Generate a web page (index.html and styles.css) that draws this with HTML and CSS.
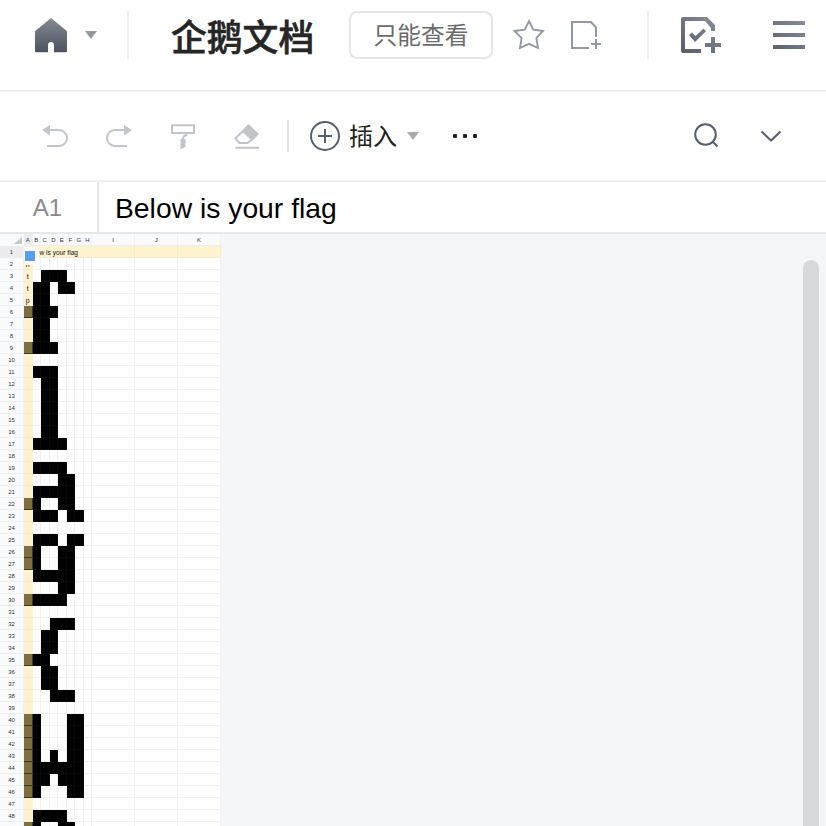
FILE: index.html
```html
<!DOCTYPE html>
<html lang="zh-CN">
<head>
<meta charset="utf-8">
<title>企鹅文档</title>
<link rel="stylesheet" href="styles.css">
</head>
<body>
<header class="titlebar">
  <svg class="home" width="32" height="35" viewBox="0 0 32 35"><defs><linearGradient id="hg" x1="0" y1="0" x2="0" y2="1"><stop offset="0" stop-color="#858a91"/><stop offset="1" stop-color="#4b5362"/></linearGradient></defs><path fill="url(#hg)" d="M16 0 31.200 12.400Q32 13 32 14V33Q32 34.300 30.700 34.300H19V27.500a3 3.500 0 0 0-6 0V34.300H1.300Q0 34.300 0 33V14Q0 13 .8 12.400Z"/></svg>
  <i class="caret caret-home"></i>
  <i class="rule"></i>
  <h1>企鹅文档</h1>
  <span class="badge">只能查看</span>
  <svg class="star" width="34" height="32" viewBox="0 0 34 32"><path fill="none" stroke="#9299a4" stroke-width="1.900" d="M17 3 21.300 11.600 31 13 24.400 20 26 30 17 25.800 8 30 9.600 20 2.500 13 12.700 11.600Z"/></svg>
  <svg class="addfile" width="31" height="29" viewBox="0 0 31 29"><path fill="none" stroke="#9299a4" stroke-width="2" d="M19 28H2V2H21L26 7.500V17M26 19V29M21 24H31"/></svg>
  <i class="rule rule-right"></i>
  <svg class="task" width="41" height="37" viewBox="0 0 41 37"><defs><linearGradient id="tg" x1="0" y1="1" x2="1" y2="0" ><stop offset="0" stop-color="#535c6b"/><stop offset="1" stop-color="#8d9299"/></linearGradient></defs><path fill="url(#tg)" d="M2 0H26L34 8V14H30V11L24 4H4V32H20V36H2Q0 36 0 34V2Q0 0 2 0ZM8 18 11 15.500 14.500 19 22.500 11.500 25 14.200 14 25ZM30 20H34V26H40V30H34V36H30V30H24V26H30Z"/></svg>
  <svg class="menu" width="32" height="28" viewBox="0 0 32 28"><defs><linearGradient id="mg" x1="0" y1="1" x2="1" y2="0"><stop offset="0" stop-color="#59616f"/><stop offset="1" stop-color="#888d95"/></linearGradient></defs><path fill="url(#mg)" d="M0 0H32V4H0ZM0 12H32V16H0ZM0 24H32V28H0Z"/></svg>
</header>
<nav class="toolbar">
  <svg class="undo" width="26" height="24" viewBox="0 0 26 24"><path fill="#c1c4c9" d="M0 5 8 0V10.500Z"/><path fill="none" stroke="#c1c4c9" stroke-width="2" d="M7 5H17A8 8 0 0 1 17 21H5"/></svg>
  <svg class="redo" width="26" height="24" viewBox="0 0 26 24"><path fill="#c1c4c9" d="M26 5 18 0V10.500Z"/><path fill="none" stroke="#c1c4c9" stroke-width="2" d="M19 5H9A8 8 0 0 0 9 21H21"/></svg>
  <svg class="format" width="24" height="26" viewBox="0 0 24 26"><path fill="none" stroke="#c1c4c9" stroke-width="2" d="M1 1.200H23V9H1ZM15.500 9V11Q12 11.500 12 16"/><path fill="#c1c4c9" d="M9.500 15H14.500V22.500L9.500 25.500Z"/></svg>
  <svg class="eraser" width="26" height="26" viewBox="0 0 26 26"><path fill="#c1c4c9" d="M14.500 0 25 10 18.500 16.500 8 6.500Z"/><path fill="none" stroke="#c1c4c9" stroke-width="2" stroke-linejoin="round" d="M9 7 1.300 14.500 5.500 19H13.500L18 15.500ZM1.500 23.700H25"/></svg>
  <i class="rule rule-tool"></i>
  <svg class="plus" width="30" height="30" viewBox="0 0 30 30"><path fill="none" stroke="#565f6e" stroke-width="2" d="M15 1A14 14 0 1 1 15 29A14 14 0 1 1 15 1ZM15 8V22M8 15H22"/></svg>
  <span class="insert">插入</span>
  <i class="caret caret-insert"></i>
  <span class="more"><i></i><i></i><i></i></span>
  <svg class="search" width="25" height="25" viewBox="0 0 25 25"><circle cx="11.500" cy="11.500" r="10.300" fill="none" stroke="#565f6e" stroke-width="2"/><path stroke="#565f6e" stroke-width="2" d="M18.500 18.500 23.500 23.500"/></svg>
  <svg class="chevron" width="22" height="13" viewBox="0 0 22 13"><path fill="none" stroke="#565f6e" stroke-width="2" d="M1.500 1.500 11 10.500 20.500 1.500"/></svg>
</nav>
<div class="formula"><span class="cellref">A1</span><span class="value">Below is your flag</span></div>
<main class="workspace">
  <div class="sheet" id="sheet"></div>
  <div class="handle"><i></i></div>
  <div class="scrollbar"></div>
</main>
<script src="sheet.js"></script>
</body>
</html>
```
FILE: styles.css
```css
* { box-sizing: border-box; }
body { margin: 0; width: 826px; height: 826px; overflow: hidden; background: #fff; font-family: "Liberation Sans", "Noto Sans CJK SC", sans-serif; }
svg { display: block; flex: none; }
.titlebar { display: flex; align-items: flex-start; height: 92px; padding-left: 35px; border-bottom: 2px solid #efefef; }
.home { margin-top: 18px; }
.caret { flex: none; width: 12px; height: 8px; background: #9298a2; clip-path: polygon(0 0, 100% 0, 50% 100%); }
.caret-home { margin: 31px 0 0 18px; }
.rule { flex: none; width: 2px; height: 48px; margin: 11px 0 0 30px; background: #efefef; }
h1 { flex: none; width: 144px; margin: 10px 0 0 42px; font: 500 35.8px/50px "Noto Sans CJK SC", sans-serif; color: #262626; -webkit-text-stroke: .6px #262626; white-space: nowrap; }
.badge { flex: none; width: 144px; height: 48px; margin: 11px 0 0 34px; border: 2px solid #e5e5e5; border-radius: 8px; font: 400 23.7px/43px "Noto Sans CJK SC", sans-serif; color: #6b6b6b; text-align: center; }
.star { margin: 18px 0 0 19px; }
.addfile { margin: 20px 0 0 24px; }
.rule-right { margin-left: 46px; }
.task { margin: 17px 0 0 32px; }
.menu { margin: 21px 0 0 51px; }
.toolbar { display: flex; align-items: flex-start; height: 90px; padding-left: 42px; border-bottom: 2px solid #efefef; }
.undo { margin-top: 33px; }
.redo { margin: 33px 0 0 38px; }
.format { margin: 32px 0 0 39px; }
.eraser { margin: 32px 0 0 39px; }
.rule-tool { height: 32px; margin: 28px 0 0 27px; background: #e3e3e3; }
.plus { margin: 29px 0 0 21px; }
.insert { flex: none; width: 48px; margin: 25px 0 0 9px; font: 400 24px/36px "Noto Sans CJK SC", sans-serif; color: #222; }
.caret-insert { margin: 40px 0 0 10px; background: #aaa; }
.more { display: flex; gap: 6px; margin: 42px 0 0 34px; }
.more i { width: 4px; height: 4px; border-radius: 1px; background: #222; }
.search { margin: 31px 0 0 217px; }
.chevron { margin: 38px 0 0 41px; }
.formula { display: flex; height: 52px; border-bottom: 2px solid #e6e7ec; }
.cellref { width: 99px; padding-right: 2px; border-right: 2px solid #e6e7ec; font-size: 24px; line-height: 52px; color: #8c8c8c; text-align: center; }
.value { padding-left: 16px; font-size: 28.3px; line-height: 53px; color: #000; white-space: nowrap; }
.workspace { position: relative; display: flex; justify-content: space-between; height: 592px; overflow: hidden; background: #f5f6f9; }
.sheet { display: grid; grid-template-columns: 24px repeat(8, 8.53px) repeat(3, 43px); grid-auto-rows: 12px; align-content: start; font-size: 6px; line-height: 12px; color: #333; }
.sheet > div { min-width: 0; text-align: center; background: #fff; border-right: 1px solid #f1f1f1; border-bottom: 1px solid #f1f1f1; white-space: nowrap; }
.sheet > .head { background: #f8fafc; border-bottom-color: #eceef2; font-size: 6px; }
.sheet > .corner { border-color: #f8fafc; }
.corner::after { content: ""; display: block; width: 8px; height: 7px; margin: 3px 0 0 14px; background: #c6c8cc; clip-path: polygon(100% 0, 100% 100%, 0 100%); }
.sheet > .current { background: #ececee; }
.sheet > .pale { background: #fff2cf; border-right-color: #fff2cf; border-bottom-color: #f7ebca; }
.sheet > .row-one { border-right-color: #f7ebca; }
.sheet > .black { background: #000; border-color: #080808; }
.sheet > .olive { background: #7d703d; border-color: #3f381d; }
.sheet > .flag { position: relative; padding-left: 7px; text-align: left; border-right-color: #fff2cf; font-size: 6.6px; line-height: 13px; color: #111; z-index: 1; }
.sheet > .row-one.covered { border-right-color: #fff2cf; }
.sheet > .letter { font-size: 7px; line-height: 13px; color: #111; }
.handle { position: absolute; z-index: 2; left: 24px; top: 13px; width: 15px; height: 18px; padding: 4px 0 0 1px; background: #fff; }
.handle i { display: block; width: 10px; height: 10px; background: #589df8; }
.scrollbar { width: 16px; height: 600px; margin: 26px 7px 0 0; border-radius: 8px; background: #d8d9dd; }
```
FILE: sheet.js
```javascript
const columns = "ABCDEFGHIJK";
const filled = {
  3: "CDE", 4: "BCEF", 5: "BC", 6: "ABCD", 7: "BC", 8: "BC", 9: "ABCD",
  11: "BCD", 12: "CD", 13: "CD", 14: "CD", 15: "CD", 16: "CD", 17: "BCDE",
  19: "BCDE", 20: "EF", 21: "BCDEF", 22: "ABEF", 23: "BCDFG",
  25: "BCDFG", 26: "ABEF", 27: "ABEF", 28: "BCDEF", 29: "EF", 30: "ABCDE",
  32: "DEF", 33: "CD", 34: "CD", 35: "ABC", 36: "CD", 37: "CD", 38: "DEF",
  40: "ABFG", 41: "ABFG", 42: "ABFG", 43: "ABDFG", 44: "ABCDEFG", 45: "ABCEFG", 46: "ABFG",
  48: "BCDE", 49: "ABEF"
};
const letters = { 2: "h", 3: "t", 4: "t", 5: "p" };
const sheet = document.getElementById("sheet");

function add(className, text) {
  const cell = document.createElement("div");
  cell.className = className;
  cell.textContent = text;
  sheet.append(cell);
}

add("head corner", "");
for (const c of columns) add(c === "A" ? "head current" : "head", c);
for (let row = 1; row <= 49; row++) {
  add(row === 1 ? "head current" : "head", row < 49 ? row : "");
  for (const c of columns) {
    if ((filled[row] || "").includes(c)) add(c === "A" ? "olive" : "black", "");
    else if (row === 1) {
      if (c === "B") add("pale flag", "w is your flag");
      else add("pale row-one" + ("CDEFGH".includes(c) ? " covered" : ""), "");
    }
    else if (c === "A") add("pale letter", letters[row] || "");
    else add("", "");
  }
}
```
